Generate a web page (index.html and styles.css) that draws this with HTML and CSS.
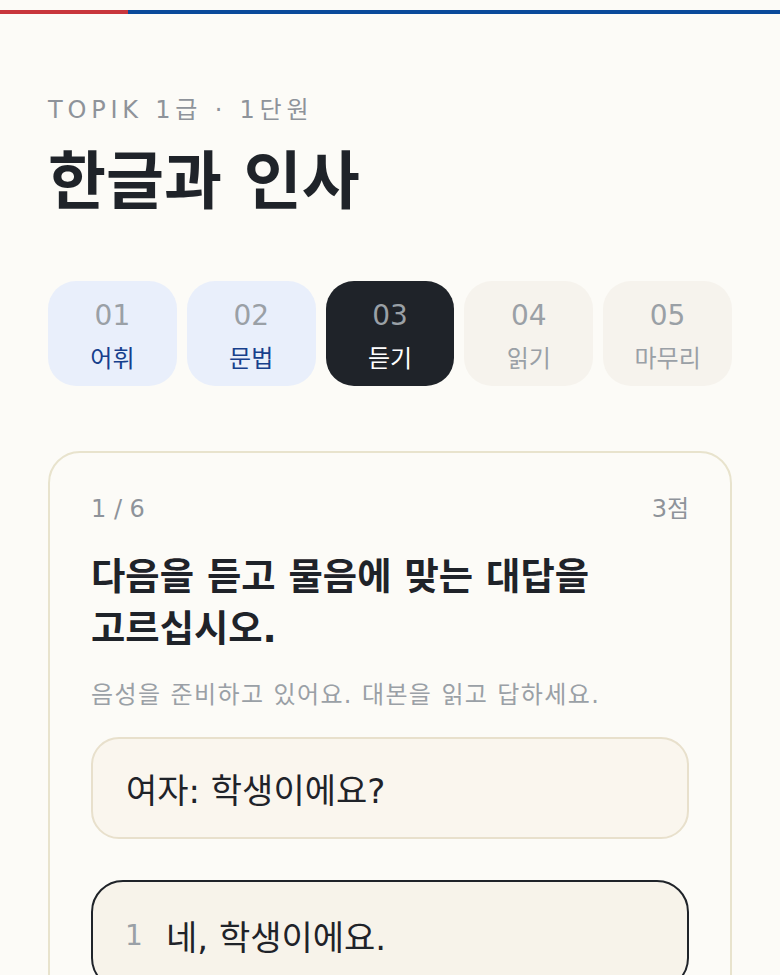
FILE: index.html
```html
<!DOCTYPE html>
<html lang="ko">
<head>
<meta charset="utf-8">
<title>한글과 인사</title>
<link rel="stylesheet" href="styles.css">
</head>
<body>
<div class="progress">
  <div class="progress-fill" style="width: 16.4%"></div>
</div>
<main class="page">
  <header class="head">
    <p class="eyebrow">TOPIK 1급 · 1단원</p>
    <h1 class="title">한글과 인사</h1>
  </header>
  <nav class="tabs">
    <div class="tab tab-done"><span class="tab-num">01</span><span class="tab-label">어휘</span></div>
    <div class="tab tab-done"><span class="tab-num">02</span><span class="tab-label">문법</span></div>
    <div class="tab tab-active"><span class="tab-num">03</span><span class="tab-label">듣기</span></div>
    <div class="tab tab-todo"><span class="tab-num">04</span><span class="tab-label">읽기</span></div>
    <div class="tab tab-todo"><span class="tab-num">05</span><span class="tab-label">마무리</span></div>
  </nav>
  <section class="card">
    <div class="card-meta">
      <span>1 / 6</span>
      <span>3점</span>
    </div>
    <h2 class="question">다음을 듣고 물음에 맞는 대답을 고르십시오.</h2>
    <p class="hint">음성을 준비하고 있어요. 대본을 읽고 답하세요.</p>
    <div class="script">여자: 학생이에요?</div>
    <div class="options">
      <div class="option option-selected"><span class="opt-num">1</span><span class="opt-text">네, 학생이에요.</span></div>
    </div>
  </section>
</main>
</body>
</html>
```

FILE: styles.css
```css
* { box-sizing: border-box; }
html, body {
  margin: 0;
  padding: 0;
  background: #fcfbf7;
}
body {
  font-family: "DejaVu Sans", "Noto Sans CJK KR", sans-serif;
  color: #1f2329;
  padding-top: 10px;
  word-break: keep-all;
}
.progress {
  height: 4px;
  background: #0a4a9a;
}
.progress-fill {
  height: 100%;
  background: #c8363c;
}
.page {
  padding: 80px 48px 0;
}
.eyebrow {
  margin: 0;
  font-size: 24px;
  letter-spacing: 0.2em;
  color: #8e939a;
  line-height: 32px;
}
.title {
  margin: 16px 0 0;
  font-size: 63px;
  font-weight: 700;
  line-height: 80px;
  color: #1f2329;
}
.tabs {
  display: grid;
  grid-template-columns: repeat(5, 1fr);
  gap: 10px;
  margin-top: 59px;
}
.tab {
  height: 105px;
  border-radius: 28px;
  display: flex;
  flex-direction: column;
  align-items: center;
  padding-top: 18px;
  gap: 11px;
}
.tab-num {
  font-size: 28px;
  line-height: 34px;
  color: #9aa0a6;
}
.tab-label {
  font-size: 24px;
  line-height: 30px;
}
.tab-done { background: #e9effb; }
.tab-done .tab-label { color: #173f8c; }
.tab-active { background: #1f2329; }
.tab-active .tab-label { color: #ffffff; }
.tab-todo { background: #f6f3ed; }
.tab-todo .tab-label { color: #9aa0a6; }
.card {
  margin-top: 65px;
  border: 2px solid #e8e3cd;
  border-radius: 32px;
  padding: 40px 41px 40px;
}
.card-meta {
  display: flex;
  justify-content: space-between;
  font-size: 24px;
  line-height: 32px;
  color: #8e939a;
}
.question {
  margin: 26px 0 0;
  font-size: 37.3px;
  font-weight: 700;
  line-height: 52px;
  color: #1f2329;
}
.hint {
  margin: 24px 0 0;
  font-size: 24px;
  letter-spacing: 1.4px;
  line-height: 32px;
  color: #9aa0a6;
}
.script {
  margin-top: 26px;
  background: #faf6ee;
  border: 2px solid #e8e0cc;
  border-radius: 28px;
  padding: 0 33px;
  height: 102px;
  display: flex;
  align-items: center;
  font-size: 34px;
}
.options {
  margin-top: 41px;
  display: flex;
  flex-direction: column;
  gap: 16px;
}
.option {
  border-radius: 32px;
  border: 2px solid #e8e0cc;
  background: #fcfbf7;
  height: 110px;
  display: flex;
  align-items: center;
  padding: 0 32px;
  font-size: 34px;
}
.option-selected {
  border-color: #1f2329;
  background: #f7f3ea;
}
.opt-num {
  width: 41px;
  flex: none;
  color: #9aa0a6;
  font-size: 28px;
}
```
